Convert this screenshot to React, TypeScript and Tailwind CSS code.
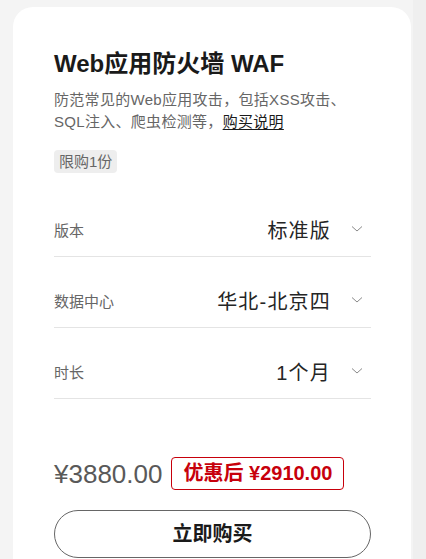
import React from "react";

const font = { fontFamily: '"Liberation Sans", "Noto Sans CJK SC", sans-serif' };

function Chevron() {
  return (
    <svg width="12" height="8" viewBox="0 0 12 8" className="mr-[8px] -mt-[4px]">
      <polyline points="1,1.5 6,6 11,1.5" fill="none" stroke="#8a8a8a" strokeWidth="1" />
    </svg>
  );
}

function Row({ label, value }: { label: string; value: string }) {
  return (
    <div className="mt-5 flex h-[51px] items-center border-b border-[#e4e4e4]">
      <span className="text-[15px] text-[#666666]">{label}</span>
      <span className="ml-auto mr-[20px] text-[20px] leading-none tracking-[1.2px] text-[#252525]">{value}</span>
      <Chevron />
    </div>
  );
}

export default function App() {
  return (
    <div className="flex h-[559px] w-[426px] overflow-hidden bg-[#f4f4f4]" style={font}>
      <div className="ml-[13px] mt-[7px] w-[398px] shrink-0 rounded-t-[20px] bg-white pl-[41px] pr-[40px] pt-[41px]">
        <h1 className="text-[24px] font-bold leading-[32px] text-[#1a1a1a]">Web应用防火墙 WAF</h1>
        <p className="mt-[9px] text-[15px] leading-[22px] tracking-[0.3px] text-[#666666]">
          防范常见的Web应用攻击，包括XSS攻击、
          <br />
          SQL注入、爬虫检测等，
          <span className="text-[#1a1a1a] underline underline-offset-2">购买说明</span>
        </p>
        <div className="mt-[17px] flex">
          <div className="rounded-[4px] bg-[#eeeeee] px-[5px] text-[15px] leading-[23px] text-[#666666]">
            限购1份
          </div>
        </div>
        <div className="mt-[33px]">
          <Row label="版本" value="标准版" />
          <Row label="数据中心" value="华北-北京四" />
          <Row label="时长" value="1个月" />
        </div>
        <div className="mt-[58px] flex items-center">
          <span className="text-[26px] leading-none text-[#595959]">¥3880.00</span>
          <span className="ml-[9px] rounded-[4px] border border-[#c7000b] px-[11px] text-[20px] font-bold leading-[31px] text-[#c7000b]">
            优惠后 ¥2910.00
          </span>
        </div>
        <button className="mt-[20px] flex h-[48px] w-full items-center justify-center rounded-full border border-[#666666] bg-white text-[20px] font-bold text-[#1a1a1a]">
          立即购买
        </button>
      </div>
      <div className="ml-[2px] w-[15px] shrink-0 bg-[#efefef]" />
    </div>
  );
}
